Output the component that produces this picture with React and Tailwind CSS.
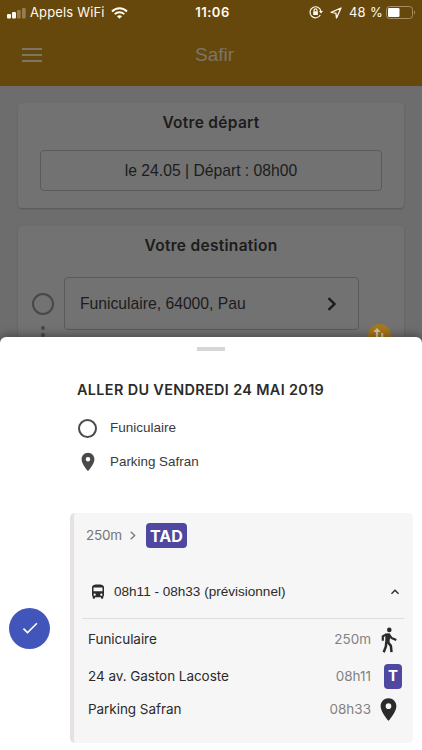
import React, { useState } from 'react';
import {
  MdCheck,
  MdDirectionsBus,
  MdKeyboardArrowUp,
  MdPlace,
} from 'react-icons/md';

const steps = [
  { label: 'Funiculaire', value: '250m', icon: 'walk' },
  { label: '24 av. Gaston Lacoste', value: '08h11', icon: 'stop' },
  { label: 'Parking Safran', value: '08h33', icon: 'place' },
];

const StatusBar = () => (
  <div className="h-6 pt-px grid grid-cols-3 items-center pl-[7px] pr-[6px] text-[13px] text-[#fffaf0]">
    <div className="flex items-center">
      <svg width="19" height="12" viewBox="0 0 19 12" fill="currentColor">
        <rect x="0" y="7" width="4" height="4.5" rx="1" />
        <rect x="5" y="5" width="4" height="6.5" rx="1" />
        <rect x="10" y="3" width="3.7" height="8.5" rx="1" opacity="0.3" />
        <rect x="15" y="1" width="3.7" height="10.5" rx="1" opacity="0.3" />
      </svg>
      <span className="ml-1 whitespace-nowrap tracking-[0.15px]">Appels WiFi</span>
      <svg className="ml-[6px]" width="17" height="12" viewBox="0 0 17 12" fill="none" stroke="currentColor">
        <path d="M1 4.5C5.1.2 11.9.2 16 4.5" strokeWidth="2" />
        <path d="M3.7 7.1c2.7-2.6 6.9-2.6 9.6 0" strokeWidth="2" />
        <path d="M8.5 11.8 5.9 9.2c1.5-1.4 3.7-1.4 5.2 0z" fill="currentColor" stroke="none" />
      </svg>
    </div>
    <span className="pl-[2px] text-center font-semibold tracking-[0.5px]">11:06</span>
    <div className="flex items-center justify-end">
      <svg className="-mt-px" width="14" height="14" viewBox="0 0 14 14" fill="none" stroke="currentColor" strokeWidth="1.2">
        <path d="M11.3 10A5.5 5.5 0 1 1 11.9 6.2" />
        <path d="M9.9 6h4.1l-2 2.6z" fill="currentColor" stroke="none" />
        <rect x="4.2" y="6.2" width="4.7" height="3.7" rx=".5" fill="currentColor" stroke="none" />
        <path d="M5.1 6.5V5.3a1.45 1.45 0 0 1 2.9 0v1.2" />
      </svg>
      <svg className="ml-[7px]" width="12" height="12" viewBox="0 0 12 12" fill="none" stroke="currentColor" strokeWidth="1.3" strokeLinejoin="round">
        <path d="M11 1 1.2 5.4l4.7.7.6 4.8z" />
      </svg>
      <span className="ml-[7px] whitespace-nowrap tracking-[0.3px]">48 %</span>
      <svg className="ml-[3px] -mt-px" width="30" height="13" viewBox="0 0 30 13" fill="none">
        <rect x=".5" y=".5" width="26" height="12" rx="3" stroke="#a58d62" />
        <rect x="2" y="2" width="11.5" height="9" rx="1.2" fill="white" />
        <path d="M28 4.5c1.5.5 1.5 3.5 0 4z" fill="#a58d62" />
      </svg>
    </div>
  </div>
);

const StepIcon = ({ type }) => {
  if (type === 'walk') {
    return (
      <svg className="ml-[6px]" width="17" height="26" viewBox="0 0 17 26" fill="none" stroke="currentColor" strokeWidth="2.2" strokeLinejoin="round">
        <circle cx="8.3" cy="2.9" r="2.3" fill="currentColor" stroke="none" />
        <path d="M4.4 6.6 8.8 6.3 9.2 10 8.3 16.2H4.2z" fill="currentColor" stroke="none" />
        <path d="M5.4 7.6 1.8 9.2v4.6" />
        <path d="M8 7.3l2.5 3.7 4.8 2" />
        <path d="M5.3 15.2l-.4 4.2-2.2 5.8" strokeWidth="2.5" />
        <path d="M6.8 15l3.1 3.9.6 6.3" strokeWidth="2.5" />
      </svg>
    );
  }
  if (type === 'stop') {
    return (
      <span className="ml-[9px] w-[18px] h-[25px] shrink-0 rounded-[4px] bg-[#5048a0] text-white text-[15px] font-bold flex items-center justify-center">
        T
      </span>
    );
  }
  return <MdPlace className="w-[27px] h-[27px]" />;
};

const App = () => {
  const [open, setOpen] = useState(true);

  return (
    <div className="w-full h-[750px] overflow-hidden flex flex-col bg-[#6d6d6d] font-['Inter',sans-serif] text-[#1c1c1c]">
      {/* Header */}
      <header className="h-[86px] shrink-0 bg-[#67480c]">
        <StatusBar />
        <div className="h-[62px] grid grid-cols-[1fr_auto_1fr] items-center pl-[22px] pr-[22px]">
          <button className="w-5 flex flex-col gap-[4px]">
            <span className="h-[2px] bg-[#7c7568]" />
            <span className="h-[2px] bg-[#7c7568]" />
            <span className="h-[2px] bg-[#7c7568]" />
          </button>
          <h1 className="pl-[7px] text-[19px] leading-6 text-[#7c7568] font-['Liberation_Sans',sans-serif]">Safir</h1>
        </div>
      </header>

      {/* Search form, dimmed behind the sheet */}
      <main className="h-[252px] shrink-0 overflow-hidden px-[18px] pt-[17px] flex flex-col gap-[18px]">
        <section className="h-[105px] shrink-0 rounded-[4px] bg-[#727272] shadow-[0_1px_2px_rgba(0,0,0,0.2)] px-[22px] pt-[10px]">
          <h2 className="text-center text-[15.5px] leading-5 font-semibold tracking-[0.3px]">Votre départ</h2>
          <div className="mt-[17px] h-[41px] rounded-[4px] border border-[#5a5a5a] flex items-center justify-center text-[15.7px] font-['Liberation_Sans',sans-serif]">
            le 24.05 | Départ : 08h00
          </div>
        </section>

        <section className="h-[180px] shrink-0 rounded-[4px] bg-[#727272] shadow-[0_1px_2px_rgba(0,0,0,0.2)] pt-[10px]">
          <h2 className="text-center text-[15.5px] leading-5 font-semibold tracking-[0.3px]">Votre destination</h2>
          <div className="mt-[21px] flex pl-[14px]">
            <div className="w-[22px] pt-[16px] flex flex-col items-center">
              <span className="w-[22px] h-[22px] shrink-0 rounded-full border-2 border-[#484848]" />
              <span className="mt-[11px] w-1 h-1 rounded-full bg-[#484848]" />
              <span className="mt-[3px] w-1 h-1 rounded-full bg-[#484848]" />
            </div>
            <div className="ml-[10px] w-[295px] h-[53px] rounded-[4px] border border-[#5a5a5a] flex items-center justify-between pl-[15px] pr-[21px] text-[15.7px] font-['Liberation_Sans',sans-serif]">
              Funiculaire, 64000, Pau
              <svg width="10" height="14" viewBox="0 0 10 14" fill="none" stroke="currentColor" strokeWidth="2.4">
                <path d="m1.5 1.2 6 5.8-6 5.8" />
              </svg>
            </div>
            <div className="ml-[9px] mt-[47px] w-[23px] h-[23px] rounded-full bg-[#a7771b]">
              <svg width="23" height="23" viewBox="0 0 23 23" fill="#c9c3b8">
                <path d="M9 4 5.2 8h2.7v6h2.2V8h2.7zM14.2 19l3.8-4h-2.7V9h-2.2v6h-2.7z" />
              </svg>
            </div>
          </div>
        </section>
      </main>

      {/* Bottom sheet */}
      <div className="relative flex-1 -mt-px rounded-t-[6px] bg-white shadow-[0_-2px_10px_rgba(0,0,0,0.35)] text-[#2b2b2b]">
        <div className="mx-auto pt-[10px] w-[28px]">
          <div className="h-1 bg-[#d6d6d6]" />
        </div>

        <div className="pl-[77px] pt-[29px]">
          <h2 className="text-[14.4px] leading-5 font-semibold whitespace-nowrap tracking-[0.36px]">
            ALLER DU VENDREDI 24 MAI 2019
          </h2>
          <div className="mt-[18px] h-5 flex items-center gap-[13px] text-[13.5px] text-[#3a3a3a] font-['Liberation_Sans',sans-serif]">
            <span className="ml-px w-[19px] h-[19px] rounded-full border-2 border-[#4a4a4a]" />
            Funiculaire
          </div>
          <div className="mt-[14px] h-5 flex items-center gap-[11px] text-[13.4px] text-[#3a3a3a] font-['Liberation_Sans',sans-serif]">
            <MdPlace className="w-[22px] h-[22px] text-[#4a4a4a]" />
            Parking Safran
          </div>
        </div>

        <div className="mt-[41px] flex items-center">
          <button className="ml-[9px] w-[41px] h-[41px] shrink-0 rounded-full bg-[#4255bb] text-white flex items-center justify-center">
            <MdCheck className="w-5 h-5" />
          </button>

          <div className="ml-[20px] w-[343px] h-[230px] rounded-[5px] border-l-4 border-[#e6e2e3] bg-[#f6f6f6]">
            <div className="pt-[10px] pl-[12px] flex items-center text-[13.5px] text-[#757575]">
              <span className="w-[36px] tracking-[-0.2px]">250m</span>
              <svg className="ml-[8px]" width="6" height="9" viewBox="0 0 6 9" fill="none" stroke="currentColor" strokeWidth="1.3">
                <path d="m.7.7 4 3.8-4 3.8" />
              </svg>
              <span className="ml-[10px] w-[41px] h-[25px] rounded-[4px] bg-[#5048a0] text-white text-[16px] font-bold flex items-center justify-center">
                TAD
              </span>
            </div>

            <div className="mt-[34px] h-[20px] pl-[15px] pr-[10px] flex items-center text-[13.55px]" onClick={() => setOpen(!open)}>
              <MdDirectionsBus className="w-[18px] h-[18px]" />
              <span className="ml-[7px] whitespace-nowrap font-['Liberation_Sans',sans-serif]">
                08h11 - 08h33 (prévisionnel)
              </span>
              <MdKeyboardArrowUp className="ml-auto w-4 h-4" />
            </div>

            {open && (
              <div className="mt-[16px] ml-[8px] mr-[9px] border-t border-[#dedede] pt-[6px]">
                {steps.map((step, idx) => (
                  <div
                    key={idx}
                    className="h-[29px] [&:nth-child(2)]:mt-[8px] [&:nth-child(3)]:mt-[4px] flex items-center pl-[6px] text-[13.5px]"
                  >
                    <span className="flex-1 tracking-[-0.05px]">{step.label}</span>
                    <span className="text-[#828282]">{step.value}</span>
                    <span className="ml-[4px] w-[29px] shrink-0 flex items-center">
                      <StepIcon type={step.icon} />
                    </span>
                  </div>
                ))}
              </div>
            )}
          </div>
        </div>
      </div>
    </div>
  );
};

export default App;
